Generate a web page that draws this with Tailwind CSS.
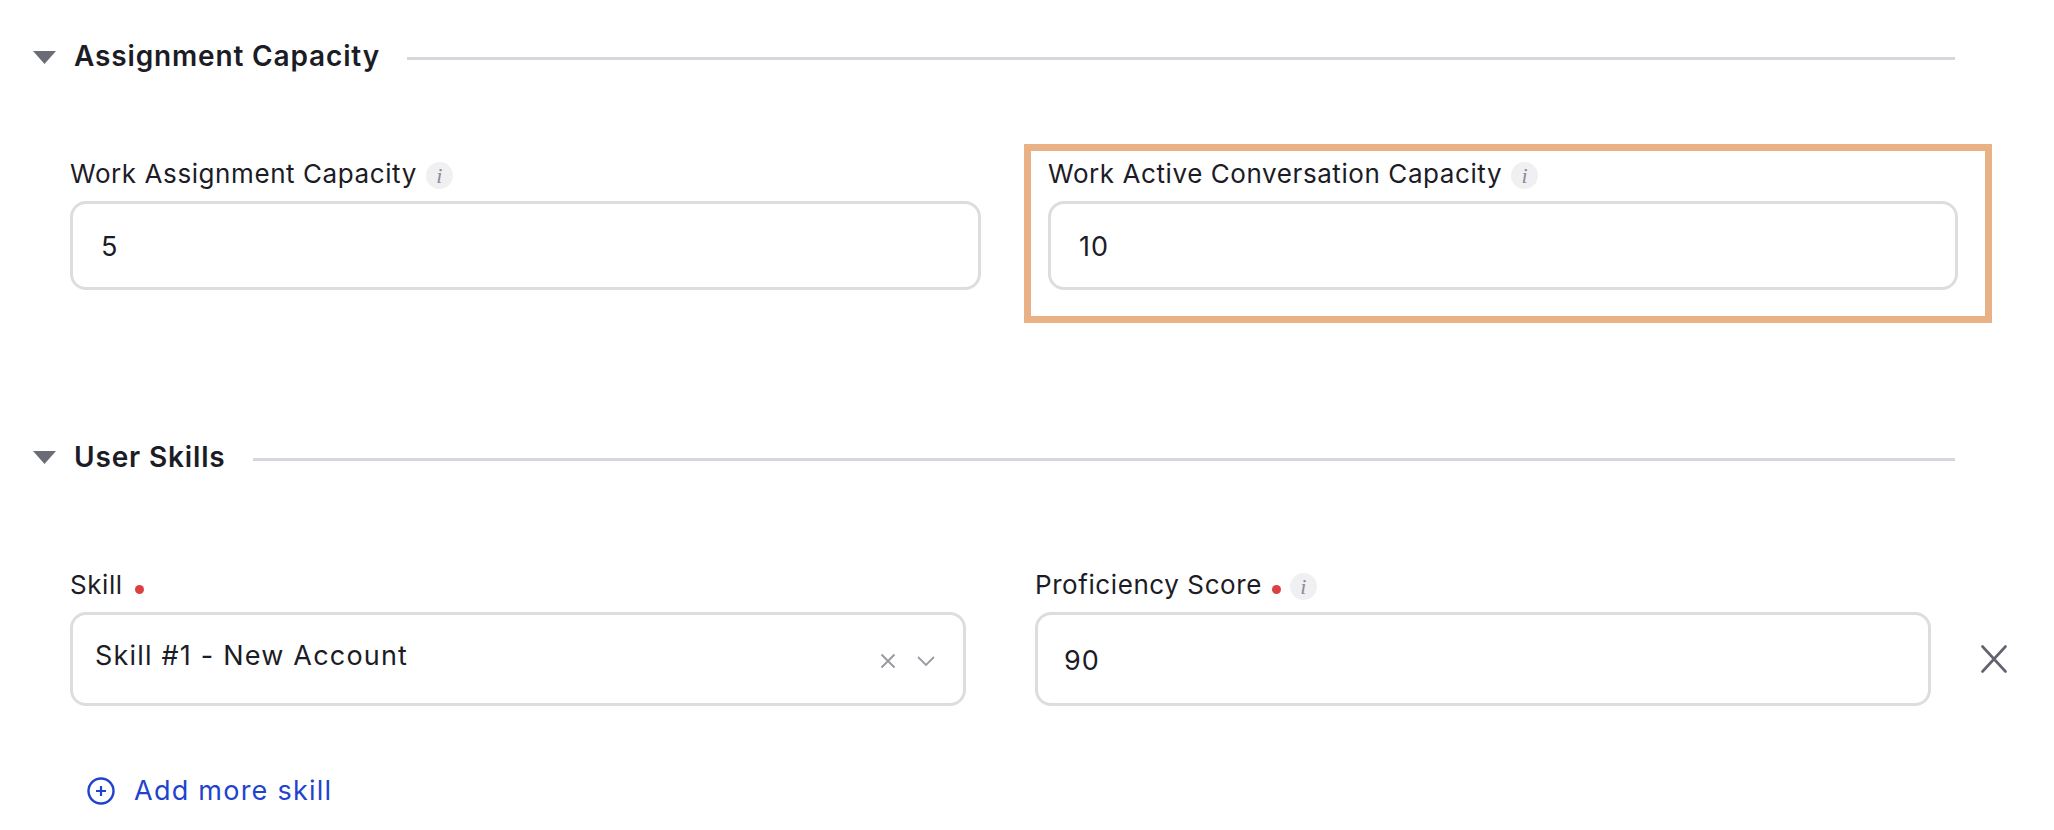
<!DOCTYPE html>
<html>
<head>
<meta charset="utf-8">
<script src="https://cdn.jsdelivr.net/npm/@tailwindcss/browser@4"></script>
</head>
<body class="m-0 bg-white">
<div class="relative w-[2054px] h-[830px] overflow-hidden bg-white font-['Inter',sans-serif] text-[#1c1c26]">

  <!-- Assignment Capacity -->
  <section class="pt-[40px] pl-[33px] pr-[99px]">
    <div class="flex items-center h-[34px]">
      <svg class="w-[23px] h-[14px] shrink-0" viewBox="0 0 23 14"><path d="M0 1h23L11.5 14z" fill="#6c6c78"/></svg>
      <h2 class="ml-[18px] pb-[2px] text-[28px] tracking-[0.85px] leading-[34px] font-semibold whitespace-nowrap">Assignment Capacity</h2>
      <div class="ml-[27px] flex-1 h-[3px] mt-[2px] bg-[#d6d6dd]"></div>
    </div>
  </section>

  <div class="mt-[88px] pl-[70px] flex">
    <div class="w-[911px]">
      <div class="flex items-center h-[27px]">
        <span class="pb-[4px] text-[26px] tracking-[0.58px] leading-[27px] whitespace-nowrap">Work Assignment Capacity</span>
        <span class="ml-[9px] flex items-center justify-center w-[27px] h-[27px] rounded-full bg-[#f0f0f3] font-['Liberation_Serif',serif] italic text-[22px] text-[#8c8c98]">i</span>
      </div>
      <div class="mt-[12px] h-[89px] border-[3px] border-[#dddde0] rounded-[16px] flex items-center pl-[28px] pt-[4px] text-[27px] tracking-[1px]">5</div>
    </div>
    <div class="ml-[67px] w-[910px]">
      <div class="flex items-center h-[27px]">
        <span class="pb-[4px] text-[26px] tracking-[0.58px] leading-[27px] whitespace-nowrap">Work Active Conversation Capacity</span>
        <span class="ml-[9px] flex items-center justify-center w-[27px] h-[27px] rounded-full bg-[#f0f0f3] font-['Liberation_Serif',serif] italic text-[22px] text-[#8c8c98]">i</span>
      </div>
      <div class="mt-[12px] h-[89px] border-[3px] border-[#dddde0] rounded-[16px] flex items-center pl-[28px] pt-[4px] text-[27px] tracking-[1px]">10</div>
    </div>
  </div>

  <!-- highlight -->
  <div class="absolute left-[1024px] top-[144px] w-[968px] h-[179px] border-[7px] border-[#e9b186]"></div>

  <!-- User Skills -->
  <section class="mt-[150px] pl-[33px] pr-[99px]">
    <div class="flex items-center h-[34px]">
      <svg class="w-[23px] h-[14px] shrink-0" viewBox="0 0 23 14"><path d="M0 1h23L11.5 14z" fill="#6c6c78"/></svg>
      <h2 class="ml-[18px] text-[28px] tracking-[0.85px] leading-[34px] font-semibold whitespace-nowrap">User Skills</h2>
      <div class="ml-[27px] flex-1 h-[3px] mt-[4px] bg-[#d6d6dd]"></div>
    </div>
  </section>

  <div class="mt-[99px] pl-[70px] flex">
    <div class="w-[896px]">
      <div class="flex items-center h-[27px]">
        <span class="pb-[4px] text-[26px] tracking-[0.58px] leading-[27px]">Skill</span>
        <span class="ml-[12px] mt-[5px] w-[9px] h-[9px] rounded-full bg-[#dc4040]"></span>
      </div>
      <div class="mt-[12px] h-[94px] border-[3px] border-[#dddde0] rounded-[16px] flex pl-[22px] pr-[28px]">
        <span class="text-[27px] tracking-[1.2px] leading-[34px] mt-[24px] whitespace-nowrap">Skill #1 - New Account</span>
        <div class="ml-auto flex items-center gap-[21px] mt-[4px]">
          <svg class="w-[16px] h-[16px]" viewBox="0 0 16 16"><path d="M1.5 1.5l13 13M14.5 1.5l-13 13" stroke="#9a9aa4" stroke-width="2" fill="none"/></svg>
          <svg class="w-[18px] h-[10px]" viewBox="0 0 18 10"><path d="M1 1l8 8 8-8" stroke="#9a9aa4" stroke-width="1.8" fill="none"/></svg>
        </div>
      </div>
    </div>
    <div class="ml-[69px] w-[896px]">
      <div class="flex items-center h-[27px]">
        <span class="pb-[4px] text-[26px] tracking-[0.58px] leading-[27px] whitespace-nowrap">Proficiency Score</span>
        <span class="ml-[10px] mt-[5px] w-[9px] h-[9px] rounded-full bg-[#dc4040]"></span>
        <span class="ml-[9px] flex items-center justify-center w-[27px] h-[27px] rounded-full bg-[#f0f0f3] font-['Liberation_Serif',serif] italic text-[22px] text-[#8c8c98]">i</span>
      </div>
      <div class="mt-[12px] h-[94px] border-[3px] border-[#dddde0] rounded-[16px] flex items-center pl-[26px] pt-[4px] text-[27px] tracking-[1px]">90</div>
    </div>
    <div class="ml-[50px] mt-[72px] h-[28px]">
      <svg class="w-[26px] h-[28px]" viewBox="0 0 26 28"><path d="M1.5 1.5l23 25M24.5 1.5l-23 25" stroke="#63636f" stroke-width="2.6" stroke-linecap="round" fill="none"/></svg>
    </div>
  </div>

  <div class="mt-[68px] ml-[87px] flex items-center">
    <svg class="w-[28px] h-[28px]" viewBox="0 0 28 28"><circle cx="14" cy="14" r="12.5" stroke="#1f43cf" stroke-width="2.4" fill="none"/><path d="M14 9v10M9 14h10" stroke="#1f43cf" stroke-width="2.2" fill="none"/></svg>
    <span class="ml-[19px] text-[27px] tracking-[1.25px] leading-[34px] text-[#1f43cf] whitespace-nowrap">Add more skill</span>
  </div>
</div>
</body>
</html>
